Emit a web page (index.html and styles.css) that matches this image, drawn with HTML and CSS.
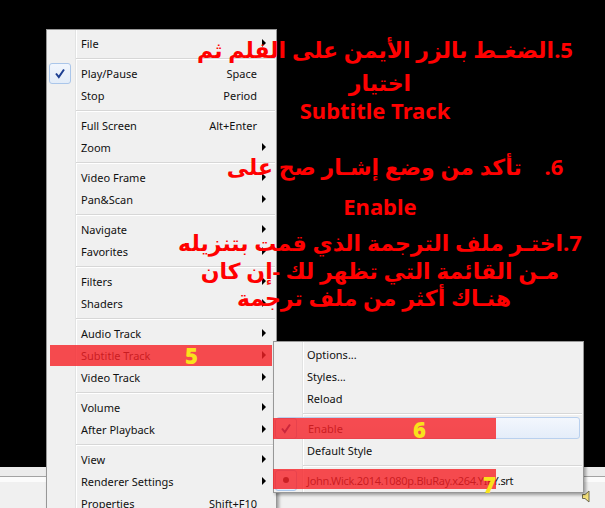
FILE: index.html
```html
<!DOCTYPE html>
<html>
<head>
    <title>Subtitle Track - menu</title>
    <meta charset="utf-8">
    <link rel="stylesheet" href="styles.css">
</head>
<body>
    <!-- Player window behind the menus -->
    <div class="player">
        <div class="player-video"></div>
        <div class="player-seek">
            <div class="player-seek-track"></div>
        </div>
        <div class="player-controls">
            <svg class="player-volume" viewBox="0 0 8 13" width="8" height="13">
                <path d="M0.5 4.5h2.5l4-3.5v11l-4-3.5h-2.5z" fill="#f6e27a" stroke="#6e6a50" stroke-width="1"/>
            </svg>
        </div>
    </div>

    <!-- Main context menu -->
    <div class="menu main-menu">
        <div class="menu-item"><span></span><span class="menu-label">File</span><span></span><span class="menu-arrow"></span></div>
        <div class="menu-sep"></div>
        <div class="menu-item">
            <span class="menu-check">
                <svg viewBox="0 0 20 19" width="20" height="19"><path d="M6 9.5l2.8 3.5 5.2-7.5" fill="none" stroke="#1d3f92" stroke-width="2"/></svg>
            </span>
            <span class="menu-label">Play/Pause</span><span class="menu-key">Space</span><span></span>
        </div>
        <div class="menu-item"><span></span><span class="menu-label">Stop</span><span class="menu-key">Period</span><span></span></div>
        <div class="menu-sep"></div>
        <div class="menu-item"><span></span><span class="menu-label">Full Screen</span><span class="menu-key">Alt+Enter</span><span></span></div>
        <div class="menu-item"><span></span><span class="menu-label">Zoom</span><span></span><span class="menu-arrow"></span></div>
        <div class="menu-sep"></div>
        <div class="menu-item"><span></span><span class="menu-label">Video Frame</span><span></span><span class="menu-arrow"></span></div>
        <div class="menu-item"><span></span><span class="menu-label">Pan&amp;Scan</span><span></span><span class="menu-arrow"></span></div>
        <div class="menu-sep"></div>
        <div class="menu-item"><span></span><span class="menu-label">Navigate</span><span></span><span class="menu-arrow"></span></div>
        <div class="menu-item"><span></span><span class="menu-label">Favorites</span><span></span><span class="menu-arrow"></span></div>
        <div class="menu-sep"></div>
        <div class="menu-item"><span></span><span class="menu-label">Filters</span><span></span><span class="menu-arrow"></span></div>
        <div class="menu-item"><span></span><span class="menu-label">Shaders</span><span></span><span class="menu-arrow"></span></div>
        <div class="menu-sep"></div>
        <div class="menu-item"><span></span><span class="menu-label">Audio Track</span><span></span><span class="menu-arrow"></span></div>
        <div class="menu-item marked">
            <span></span><span class="menu-label">Subtitle Track</span><span></span><span class="menu-arrow"></span>
            <span class="step step-5">5</span>
        </div>
        <div class="menu-item"><span></span><span class="menu-label">Video Track</span><span></span><span class="menu-arrow"></span></div>
        <div class="menu-sep"></div>
        <div class="menu-item"><span></span><span class="menu-label">Volume</span><span></span><span class="menu-arrow"></span></div>
        <div class="menu-item"><span></span><span class="menu-label">After Playback</span><span></span><span class="menu-arrow"></span></div>
        <div class="menu-sep"></div>
        <div class="menu-item"><span></span><span class="menu-label">View</span><span></span><span class="menu-arrow"></span></div>
        <div class="menu-item"><span></span><span class="menu-label">Renderer Settings</span><span></span><span class="menu-arrow"></span></div>
        <div class="menu-item"><span></span><span class="menu-label">Properties</span><span class="menu-key">Shift+F10</span><span></span></div>
    </div>

    <!-- Subtitle Track submenu -->
    <div class="menu sub-menu">
        <div class="menu-item"><span></span><span class="menu-label">Options...</span></div>
        <div class="menu-item"><span></span><span class="menu-label">Styles...</span></div>
        <div class="menu-item"><span></span><span class="menu-label">Reload</span></div>
        <div class="menu-sep"></div>
        <div class="menu-item hover">
            <span class="menu-check">
                <svg viewBox="0 0 20 19" width="20" height="19"><path d="M6 9.5l2.8 3.5 5.2-7.5" fill="none" stroke="#1d3f92" stroke-width="2"/></svg>
            </span>
            <span class="menu-label">Enable</span>
            <span class="paint paint-enable"></span>
            <span class="step step-6">6</span>
        </div>
        <div class="menu-item"><span></span><span class="menu-label">Default Style</span></div>
        <div class="menu-sep"></div>
        <div class="menu-item">
            <span class="menu-check"><span class="menu-dot"></span></span>
            <span class="menu-label file-name">John.Wick.2014.1080p.BluRay.x264.YIFY.srt</span>
            <span class="paint paint-file"></span>
            <span class="step step-7">7</span>
        </div>
    </div>

    <!-- Instructions written over the screenshot -->
    <div class="notes" dir="rtl">
        <div class="note n1">5.الضغـط بالزر الأيمن على الفلم ثم</div>
        <div class="note n2">اختيار</div>
        <div class="note n3" dir="ltr">Subtitle Track</div>
        <div class="note n4">6.&nbsp;&nbsp;&nbsp; تأكد من وضع إشـار صح على</div>
        <div class="note n5" dir="ltr">Enable</div>
        <div class="note n6">7.اختـر ملف الترجمة الذي قمت بتنزيله</div>
        <div class="note n7">مـن القائمة التي تظهر لك -إن كان</div>
        <div class="note n8">هنـاك أكثر من ملف ترجمة</div>
    </div>
</body>
</html>
```

FILE: styles.css
```css
/* Screenshot of a media player context menu with notes on top */
html, body {
    margin: 0;
    height: 508px;
    overflow: hidden;
    background: #000;
}

body {
    position: relative;
    font-family: "Noto Sans", "DejaVu Sans", sans-serif;
}

.player {
    display: flex;
    flex-direction: column;
    height: 508px;
}

.player-video {
    height: 467px;
    background: #000;
}

.player-seek {
    height: 9px;
    background: #ececec;
    border-bottom: 1px solid #a3a3a3;
}

.player-seek-track {
    margin-top: 9px;
}

.player-controls {
    flex: 1;
    background: linear-gradient(#fbfbfb 0, #fbfbfb 5px, #f0f0f0 5px);
    display: flex;
    justify-content: flex-end;
    padding: 13px 15px 0 0;
}

.player-volume {
    display: block;
}

/* Menus */
.menu {
    position: absolute;
    box-sizing: border-box;
    background-color: #f0f0f0;
    background-image: linear-gradient(to right, transparent 28px, #e2e3e3 28px, #e2e3e3 29px, #fff 29px, #fff 30px, transparent 30px);
    border: 1px solid #979797;
    box-shadow: 2px 2px 3px rgba(0, 0, 0, 0.35);
    padding: 2px 0;
    font-size: 11px;
    color: #111;
}

.main-menu {
    left: 46px;
    top: 29px;
    width: 231px;
    z-index: 1;
}

.sub-menu {
    left: 273px;
    top: 341px;
    width: 311px;
    height: 152px;
    padding-top: 1px;
    z-index: 2;
}

.menu-item {
    position: relative;
    display: grid;
    grid-template-columns: 26px 1fr auto 15px;
    align-items: center;
    height: 22px;
    margin: 0 4px 0 3px;
    box-sizing: border-box;
}

.sub-menu .menu-item {
    grid-template-columns: 26px 1fr;
    margin: 0 3px 0 2px;
}

.menu-label {
    padding-left: 5px;
    white-space: nowrap;
}

.file-name {
    letter-spacing: -0.3px;
}

.menu-key {
    white-space: nowrap;
}

.menu-arrow {
    width: 0;
    height: 0;
    margin-left: 5px;
    border-left: 4px solid #000;
    border-top: 4px solid transparent;
    border-bottom: 4px solid transparent;
}

.menu-sep {
    height: 8px;
    margin-left: 29px;
    margin-right: 1px;
    background: linear-gradient(transparent 4px, #d7d7d7 4px, #d7d7d7 5px, #fff 5px, #fff 6px, transparent 6px);
}

.menu-check {
    width: 20px;
    height: 19px;
    margin-left: -1px;
    border: 1px solid #aac6ea;
    border-radius: 3px;
    background: linear-gradient(#f1f6fd, #e3ecf8);
    display: flex;
    align-items: center;
    justify-content: center;
}

.menu-check svg {
    display: block;
}

.menu-dot {
    width: 6px;
    height: 6px;
    border-radius: 50%;
    background: #222;
}

.menu-item.hover {
    border: 1px solid #b9d0ee;
    border-radius: 3px;
    background: linear-gradient(#f3f7fd, #e4edf9);
}

.menu-item.hover .menu-check {
    margin-left: -2px;
}

/* Red marker strokes painted over the screenshot */
.menu-item.marked::after,
.paint {
    content: '';
    position: absolute;
    background: rgba(246, 33, 38, 0.8);
}

.menu-item.marked::after {
    left: 0;
    right: 0;
    top: 1px;
    bottom: 0;
}

.paint-enable {
    left: -4px;
    width: 223px;
    top: 0;
    height: 21px;
}

.paint-file {
    left: -3px;
    width: 223px;
    top: 0;
    height: 20px;
}

.step {
    position: absolute;
    z-index: 1;
    font-family: "Open Sans", sans-serif;
    font-weight: 800;
    font-size: 22px;
    line-height: 22px;
    color: #f9e21b;
}

.step-5 {
    left: 135px;
    top: 0;
}

.step-6 {
    left: 136px;
    top: 0;
}

.step-7 {
    left: 207px;
    top: 4px;
}

/* Arabic notes */
.notes {
    position: absolute;
    left: 170px;
    top: 35px;
    width: 420px;
    z-index: 3;
    color: #f00;
    font-family: "Noto Sans", "DejaVu Sans", sans-serif;
    font-weight: 700;
    font-size: 22px;
    line-height: 28px;
    text-align: center;
}

.note {
    white-space: nowrap;
}

.n1 {
    padding-left: 10px;
}

.n2 {
    margin-top: 5px;
}

.n3 {
    padding-right: 10px;
}

.n4 {
    margin-top: 28px;
    padding-left: 30px;
}

.n5 {
    margin-top: 12px;
}

.n6 {
    margin-top: 8px;
}

.n8 {
    margin-top: -1px;
    padding-right: 12px;
}
```
